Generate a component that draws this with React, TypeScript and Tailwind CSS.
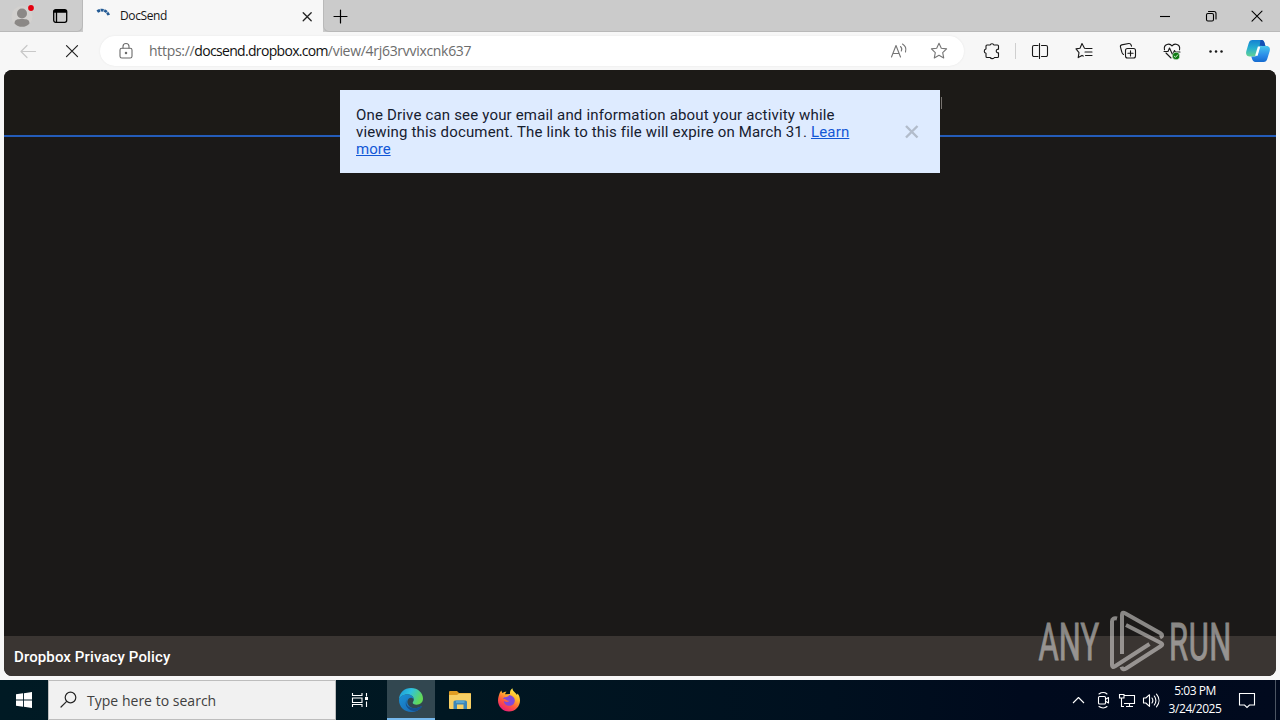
import type { ReactNode } from "react";

type IconProps = { size?: number; className?: string; children: ReactNode; width?: number };

/** Line icon on a square pixel grid. */
function Icon({ size = 20, className = "", children, width = 1.1 }: IconProps) {
  return (
    <svg
      width={size}
      height={size}
      viewBox={`0 0 ${size} ${size}`}
      fill="none"
      stroke="currentColor"
      strokeWidth={width}
      strokeLinecap="round"
      strokeLinejoin="round"
      className={`shrink-0 ${className}`}
    >
      {children}
    </svg>
  );
}

const STAR = "M10 2.3l2.3 4.9 5.3.7-3.9 3.7 1 5.3-4.7-2.6-4.7 2.6 1-5.3-3.9-3.7 5.3-.7z";

function TabStrip() {
  return (
    <div className="flex h-8 bg-[#cbcbcb]">
      <div className="flex h-8 w-[83px] items-center rounded-br-md border-b border-r border-[#b9b9b9] bg-[#cdcdcd] pl-[11px]">
        <svg width="24" height="24" viewBox="0 0 24 24" className="shrink-0">
          <circle cx="11" cy="12.500" r="10.500" fill="#d3d1cf" />
          <circle cx="11" cy="9.500" r="5" fill="#8b8886" />
          <path d="M3.500 19.500c0-4 3-4.500 7.500-4.500s7.500.5 7.500 4.500c-2 2.500-4.500 3.300-7.500 3.300s-5.500-.8-7.500-3.300z" fill="#8b8886" />
          <circle cx="20" cy="4" r="3.600" fill="#d6d4d2" />
          <circle cx="20" cy="4" r="2.900" fill="#e3000f" />
        </svg>
        <Icon className="ml-[15px] text-black" width={1.3}>
          <rect x="3.700" y="3.700" width="13" height="12.600" rx="2" />
          <path d="M4 6h12.500M6.500 6v10" />
          <path d="M4.500 5h11.500" strokeWidth="2" />
        </Icon>
      </div>
      <div className="flex h-8 w-[240px] items-center bg-[#f7f7f7] pl-[11px]">
        <svg width="20" height="20" viewBox="0 0 20 20" className="shrink-0" fill="none">
          <path d="M3.300 5.600A7.300 7.300 0 0 1 14.800 9.600" stroke="#235a94" strokeWidth="2.700" strokeDasharray="3 .6" />
        </svg>
        <span className="ml-1.5 w-[177px] whitespace-nowrap font-['Open_Sans','Noto_Sans',sans-serif] text-[12px] tracking-[-0.4px] text-[#161616]">
          DocSend
        </span>
        <Icon className="text-[#222]" width={1.3}>
          <path d="M6.200 6.700l8 8M14.200 6.700l-8 8" />
        </Icon>
      </div>
      <div className="flex h-8 flex-1 items-center rounded-bl-md border-b border-l border-[#b9b9b9] pl-[6px]">
        <Icon className="text-black" width={1.2}>
          <path d="M10.500 4v13M4 10.500h13" />
        </Icon>
        <div className="ml-auto flex text-black">
          <div className="flex w-[46px] justify-center">
            <Icon width={1.1}>
              <path d="M5 10.500h10" strokeLinecap="butt" />
            </Icon>
          </div>
          <div className="flex w-[46px] justify-center">
            <Icon width={1.1}>
              <rect x="5.500" y="7.500" width="7" height="7.500" rx="1.400" />
              <path d="M7.500 5.500h5.500a2 2 0 0 1 2 2v5.500" />
            </Icon>
          </div>
          <div className="flex w-[46px] justify-center">
            <Icon width={1.1}>
              <path d="M5 5.200l10 10M15 5.200l-10 10" />
            </Icon>
          </div>
        </div>
      </div>
    </div>
  );
}

function AddressBar() {
  return (
    <div className="flex h-[30px] w-[864px] items-center rounded-full bg-white pl-[16px] pr-[15px] shadow-[0_0_2px_#e4e4e4]">
      <Icon className="text-[#6b6b6b]" width={1.1}>
        <rect x="4" y="7.300" width="12" height="9.700" rx="1.800" />
        <path d="M7 7V5.500a3 3 0 0 1 6 0V7" />
        <circle cx="10" cy="12" r=".7" fill="currentColor" />
      </Icon>
      <div className="ml-[13px] flex-1 whitespace-nowrap font-['Open_Sans','Noto_Sans',sans-serif] text-[14px] leading-[18px] text-[#6c6c6c]">
        <span className="tracking-[-0.3px]">https://</span>
        <span className="tracking-[-0.68px] text-[#111]">docsend.dropbox.com</span>
        <span className="tracking-[-0.3px]">/view/4rj63rvvixcnk637</span>
      </div>
      <Icon className="text-[#757575]">
        <path d="M2.500 16L7 4.500l4.500 11.500M4 12.500h6M11.500 5.500c1.300 1.200 1.500 3 .8 4.500M13.500 3c3 1.800 4 4.500 3 8" />
      </Icon>
      <Icon className="ml-5 text-[#757575]">
        <path d={STAR} />
      </Icon>
    </div>
  );
}

function Copilot() {
  return (
    <svg width="26" height="26" viewBox="0 0 26 26" className="shrink-0">
      <defs>
        <linearGradient id="cpA" x1="0" y1="0" x2="0" y2="1">
          <stop offset="0" stopColor="#1482d2" />
          <stop offset=".5" stopColor="#26afd0" />
          <stop offset="1" stopColor="#63d293" />
        </linearGradient>
        <linearGradient id="cpB" x1="0" y1="0" x2="0" y2="1">
          <stop offset="0" stopColor="#46c6ee" />
          <stop offset=".6" stopColor="#2a8be8" />
          <stop offset="1" stopColor="#156bd0" />
        </linearGradient>
      </defs>
      <path d="M7.500 2h9c2 0 2.600 1.500 3.100 3.200l.8 2.800h-2.600c-2 0-2.900 1-3.400 2.800L12.600 16c-.5 2-1.600 2.400-3.500 2.400H4.500C1.500 18.400.6 16 1.300 13.300L3.600 5.500C4.300 3 5.400 2 7.500 2z" fill="url(#cpA)" />
      <path d="M18.500 24h-8c-2 0-2.900-1.300-3.500-3.200l-.7-2.400h3c2 0 3-.9 3.500-2.700l1.600-5.200c.6-1.900 1.700-2.500 3.600-2.500h3.500c3 0 3.900 2.400 3.200 5.100l-2.300 7.400C21.700 23 20.600 24 18.500 24z" fill="url(#cpB)" />
      <path d="M15.500 2h1c2 0 2.600 1.500 3.100 3.200l.8 2.800h-2.600c-2 0-3.300-.7-3.300 1z" fill="#134fb5" />
      <path d="M12.900 8.500h2.400l-2.700 9.300h-2.500z" fill="#fff" />
    </svg>
  );
}

function Toolbar() {
  return (
    <div className="flex h-[38px] items-center bg-[#f7f7f7] pl-[18px]">
      <Icon className="text-[#c8c8c8]" width={1.2}>
        <path d="M3 10.500h14.500M9 4.500l-6 6 6 6" />
      </Icon>
      <Icon className="ml-6 text-[#222]" width={1.2}>
        <path d="M4.500 4.700l11 11M15.500 4.700l-11 11" />
      </Icon>
      <div className="ml-[18px]">
        <AddressBar />
      </div>
      <div className="flex items-center text-[#181818]">
        <Icon className="ml-[18px]">
          <path d="M5 4h3.200c.2-1.700 3.400-1.700 3.600 0H15.500c.6 0 1 .4 1 1v3.200c-3-.4-3 4 0 3.600V15.500c0 .6-.4 1-1 1h-3.200c-.3 1.500-3.600 1.500-4 0H5c-.6 0-1-.4-1-1v-3.200c-2.300-.4-2.300-3.900 0-4.300V5c0-.6.4-1 1-1z" />
        </Icon>
        <div className="ml-[13px] h-4 w-px bg-[#cfcfcf]" />
        <Icon className="ml-[14px]">
          <path d="M8 4.500H4a1.500 1.500 0 0 0-1.500 1.500v8A1.500 1.500 0 0 0 4 15.500h4M11.500 4.500h4.500a1.500 1.500 0 0 1 1.500 1.500v8a1.500 1.500 0 0 1-1.500 1.500h-4.500M9.500 2.500v15" />
        </Icon>
        <Icon className="ml-6">
          <path d="M12.200 7.500L10.500 7.200 8 2.500 6 7.200l-4 .7 3 3.700-.8 5 3.800-2.200 1.200.7M12.500 7.500H18M11 11h7M11.500 14.500H18" />
        </Icon>
        <Icon className="ml-6">
          <rect x="7.500" y="7.500" width="10" height="9.500" rx="2" />
          <path d="M12.500 9.700v5.200M9.900 12.300h5.200M5.500 13.500C4.500 13 4 12 3.800 11L2.500 6.200c-.3-1 .2-2 1.200-2.300l7-1.400c1.200-.2 2 .4 2.400 1.500l.4 1.200" />
        </Icon>
        <Icon className="ml-6">
          <path d="M2.500 8.800C1.200 2.500 8 2 10 5c2-3 8.800-2.500 7.500 3.800M4 12l5 5M2 10.500h4l1.500-3.500 3 6.500 2-4 1 1.500H18" />
          <circle cx="14" cy="15" r="3.800" fill="#0f7b14" stroke="#f7f7f7" strokeWidth=".6" />
          <path d="M12.200 15.100l1.300 1.200 2.300-2.500" stroke="#dff2df" strokeWidth=".9" />
        </Icon>
        <Icon className="ml-6">
          <g fill="currentColor" stroke="none">
            <circle cx="4.500" cy="10.500" r="1.250" />
            <circle cx="10" cy="10.500" r="1.250" />
            <circle cx="15.500" cy="10.500" r="1.250" />
          </g>
        </Icon>
        <div className="ml-[19px]">
          <Copilot />
        </div>
      </div>
    </div>
  );
}

function ActivityBanner() {
  return (
    <div className="absolute left-[336px] top-5 flex h-[83px] w-[600px] bg-[#deebff] pl-4 pt-[17px]">
      <p className="w-[520px] whitespace-nowrap font-['Roboto','Liberation_Sans',sans-serif] text-[15px] leading-[17px] text-[#16202f]">
        <span className="block tracking-[0.175px]">One Drive can see your email and information about your activity while</span>
        <span className="block tracking-[0.16px]">
          viewing this document. The link to this file will expire on March 31.{" "}
          <span className="text-[#1257d6] underline underline-offset-1">Learn</span>
        </span>
        <span className="block tracking-[0px] text-[#1257d6] underline underline-offset-1">more</span>
      </p>
      <Icon className="ml-[25px] mt-[14px] text-[#b2bccb]" width={2.400}>
        <path d="M5 5l11.500 11.500M16.500 5L5 16.500" strokeLinecap="butt" />
      </Icon>
    </div>
  );
}

function Watermark() {
  return (
    <svg width="200" height="70" viewBox="1035 605 200 70" className="absolute left-[1031px] top-[535px] opacity-55">
      <g
        fill="#e4e1df"
        stroke="#e4e1df"
        strokeWidth=".9"
        fontFamily="Roboto, Liberation Sans, sans-serif"
        fontSize="51.500"
      >
        <text transform="translate(1038.500 659.500) scale(.6 1)" textLength="101" lengthAdjust="spacing">ANY</text>
        <text transform="translate(1169 659.500) scale(.6 1)" textLength="104" lengthAdjust="spacing">RUN</text>
      </g>
      <path
        d="M1117 618.500c-3-.8-5 .2-5 3V665q0 3 3 1.300L1149.500 644M1122 654V615q0-3.500 3-1.800L1160.500 633.300q3.500 2.200-.5 4.200M1126 625L1161 643q2.500 1.500 0 3L1126 668.500q-3.500 2-4.500-1.800"
        fill="none"
        stroke="#e4e1df"
        strokeWidth="4"
        strokeLinejoin="round"
      />
    </svg>
  );
}

function DocumentView() {
  return (
    <main className="relative flex h-[606px] flex-col overflow-hidden rounded-lg bg-[#1b1918]">
      <header className="flex h-[67px] shrink-0 items-start border-b-2 border-[#245cb9] bg-[#1c1a17]">
        <div className="ml-[937px] mt-[27px] h-3 w-px bg-[#77736f]" />
      </header>
      <div className="flex-1" />
      <footer className="flex h-10 shrink-0 items-center bg-[#3a3532] pl-[10px] pt-[2px]">
        <span className="whitespace-nowrap font-['Roboto','Liberation_Sans',sans-serif] text-[15px] font-medium tracking-[0.12px] text-white">
          Dropbox Privacy Policy
        </span>
      </footer>
      <ActivityBanner />
      <Watermark />
    </main>
  );
}

function EdgeLogo() {
  return (
    <svg width="26" height="26" viewBox="0 0 26 26">
      <defs>
        <linearGradient id="edTop" x1="0" y1="0" x2="1" y2=".4">
          <stop offset="0" stopColor="#1995d5" />
          <stop offset=".5" stopColor="#2fc2df" />
          <stop offset="1" stopColor="#62d957" />
        </linearGradient>
        <linearGradient id="edLow" x1="0" y1="0" x2="1" y2="1">
          <stop offset="0" stopColor="#1991d6" />
          <stop offset="1" stopColor="#1a63ad" />
        </linearGradient>
      </defs>
      <path d="M1 13C1 5.500 6.500 1 13 1c7 0 12 5 12 10.500 0 4-3 6.200-6.300 6.200-2.700 0-4-1-4-1.900 0-.8 1.100-1.300 1.100-3.300 0-3-2.800-5-6.300-5C4.500 7.500 1.500 10 1 13z" fill="url(#edTop)" />
      <path d="M1 13c.5-3.500 4-5.500 8.500-5.500 3.500 0 6.300 2 6.300 5-1-2-3.500-2.300-5-1-3 2.700-1 8.500 4 9.500 3.500.6 6-.3 8.200-1.700.5-.3.9.1.6.6C21.500 23 17.500 25 13.500 25 6 25 1 19.500 1 13z" fill="url(#edLow)" />
      <path d="M10 11.500c-3 2.500-2.500 9 4.800 9.500 3.500.6 6-.3 8.200-1.700.5-.3.9.1.6.6C22 22 19.500 23.500 17 24.200 10 24 4.500 17 10 11.500z" fill="#15508f" />
    </svg>
  );
}

function FolderLogo() {
  return (
    <svg width="24" height="22" viewBox="0 0 24 22">
      <path d="M1 3q0-1 1-1h7l2 2h11q1 0 1 1v4H1z" fill="#e09d22" />
      <path d="M1 6h8l2-1.500h12V19q0 1-1 1H2q-1 0-1-1z" fill="#f7cf64" />
      <path d="M5.500 13q0-1.500 1.500-1.500h10.500q1.500 0 1.500 1.500v7h-3.500v-4.500h-6.500V20H5.500z" fill="#3c86b8" />
      <path d="M8 11.500h8.500v2.500H8z" fill="#57a5d0" />
    </svg>
  );
}

function FirefoxLogo() {
  return (
    <svg width="26" height="26" viewBox="0 0 26 26">
      <defs>
        <linearGradient id="ffA" x1=".8" y1="0" x2=".25" y2="1">
          <stop offset="0" stopColor="#fff44f" />
          <stop offset=".35" stopColor="#ffb52a" />
          <stop offset=".65" stopColor="#ff593d" />
          <stop offset="1" stopColor="#e8177d" />
        </linearGradient>
      </defs>
      <path d="M3.500 6.500C4 5 4.800 4 5.500 3.500c0 1 .4 1.800.9 2.400C8 4.800 9.500 4.600 10.500 4.700 9.500 5.600 9 6.500 9.200 7.200L14 7c-.3-2.500.6-4.500 2.400-5.800.2 2 1.200 3 2.500 4.200C20 6.500 20.500 7 21 8l.5-1.500C23.300 8.500 24 11 24 13.500 24 19.700 19 24.500 13 24.500S2 19.700 2 13.500c0-2.500.7-4.700 1.500-7z" fill="url(#ffA)" />
      <path d="M8.500 10.200c2 0 3.500-.2 4.800-2.200 3.500.7 5.700 3 5.500 5.800-.1 3-2.500 5-5.600 5-3 0-5.500-2-5.300-4.800 2 1.500 4 1.500 5.600-.3-1.500.3-2.500-.4-3.500-1-1-.7-2-.5-3-.7.3-.8.800-1.400 1.500-1.800z" fill="#8149d8" />
    </svg>
  );
}

function Taskbar() {
  return (
    <div className="flex h-10 bg-[linear-gradient(90deg,#001a24_0%,#001722_35%,#00101f_65%,#000a1d_80%,#010a1e_100%)] text-white">
      <div className="flex w-12 items-center justify-center">
        <svg width="16" height="16" viewBox="0 0 16 16" fill="#fff">
          <path d="M0 2.300l7-1v6.200H0zM7.900 1.200L16 0v7.500H7.900zM0 8.400h7v6.300l-7-1zM7.900 8.400H16V16l-8.100-1.200z" />
        </svg>
      </div>
      <div className="flex w-72 items-center border border-[#bdbdbd] bg-[#f1f1f1] pl-[9px]">
        <Icon className="text-[#262626]" width={1.2}>
          <circle cx="12.500" cy="7.500" r="5.300" />
          <path d="M8.700 11.300L3 17" />
        </Icon>
        <span className="ml-[9px] whitespace-nowrap font-['Open_Sans','Noto_Sans',sans-serif] text-[14px] tracking-[0.02px] text-[#404040]">
          Type here to search
        </span>
      </div>
      <div className="flex w-[51px] items-center pl-[14px]">
        <Icon width={1.1}>
          <path d="M2.500 3v2.500h9.500V3M2.500 17v-2.500h9.500V17M2.500 8h9.500v4.500H2.500zM16.500 3v3.500M16.500 11.500V17" strokeLinecap="butt" strokeLinejoin="miter" />
          <rect x="15" y="7" width="3" height="3" fill="#fff" stroke="none" />
        </Icon>
      </div>
      <div className="flex w-12 items-center justify-center border-b-2 border-[#76b9ed] bg-[#324750] pt-[2px]">
        <EdgeLogo />
      </div>
      <div className="flex w-[49px] items-center justify-center">
        <FolderLogo />
      </div>
      <div className="flex w-[49px] items-center justify-center">
        <FirefoxLogo />
      </div>
      <div className="ml-auto flex items-center">
        <Icon>
          <path d="M4 13l5.500-5.500L15 13" strokeLinecap="butt" />
        </Icon>
        <Icon className="ml-1">
          <rect x="5.500" y="6.500" width="7" height="7.500" rx="1" />
          <path d="M12.500 9.200l3-1.700v5.500l-3-1.700M6 4c2.500-1.800 6-1.800 8 0M6 16.500c2.500 1.800 6 1.800 8 0" />
        </Icon>
        <Icon className="ml-1">
          <path d="M7.500 5.500h10v8H7M12.500 13.500v3M9 16.500h7M2.500 4.500h4.500v3.500H2.500zM4.500 8v8.500h2.500" strokeLinecap="butt" strokeLinejoin="miter" />
        </Icon>
        <Icon className="ml-1">
          <path d="M2.500 8v5h2.300l3.700 3.300V4.700L4.800 8zM11 8c1 1.500 1 3.500 0 5M13.300 6c2 2.800 2 6.200 0 9M15.500 4.200c3.300 3.800 3.300 8.800 0 12.600" />
        </Icon>
        <div className="ml-[2px] w-16 whitespace-nowrap text-center font-['Open_Sans','Noto_Sans',sans-serif] text-[12px] leading-[18px] tracking-[-0.45px]">
          <div>5:03 PM</div>
          <div>3/24/2025</div>
        </div>
        <Icon className="ml-[10px]" width={1.1}>
          <path d="M2.500 3.500h15v11.500h-5L10 17.500 7.500 15h-5z" strokeLinejoin="miter" />
        </Icon>
        <div className="ml-[18px] h-10 w-px bg-[#4c5563]" />
        <div className="w-1" />
      </div>
    </div>
  );
}

export default function App() {
  return (
    <div className="flex h-[720px] w-[1280px] flex-col overflow-hidden bg-[#f7f7f7]">
      <TabStrip />
      <Toolbar />
      <div className="h-[610px] px-1">
        <DocumentView />
      </div>
      <Taskbar />
    </div>
  );
}
